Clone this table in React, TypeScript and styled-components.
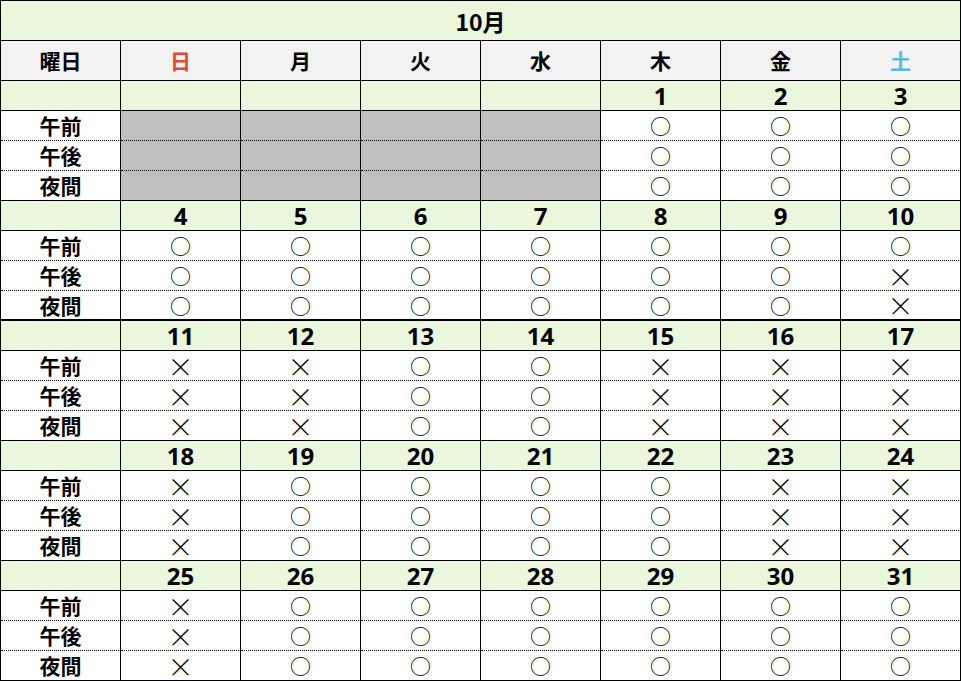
import React from 'react';
import styled, { createGlobalStyle, css } from 'styled-components';

const GlobalStyle = createGlobalStyle`
  html, body {
    margin: 0;
    padding: 0;
    background: #ffffff;
  }
  body {
    font-family: "Noto Sans CJK JP", "Noto Sans", sans-serif;
    color: #000;
  }
`;

const GREEN = '#ebf7dc';
const HEAD = '#f2f2f2';
const BLOCKED = '#bfbfbf';

const Sheet = styled.div`
  display: grid;
  grid-template-columns: repeat(8, 120px);
  width: 961px;
  box-sizing: border-box;
  border-top: 1px solid #000;
  border-left: 1px solid #000;
`;

const Title = styled.div`
  grid-column: 1 / -1;
  height: 40px;
  box-sizing: border-box;
  border-right: 1px solid #000;
  border-bottom: 1px solid #000;
  background: ${GREEN};
  display: flex;
  align-items: center;
  justify-content: center;
  font-size: 23px;
  font-weight: 700;
`;

const Cell = styled.div<{ $bg?: string; $h: number; $dotted?: boolean; $thick?: boolean }>`
  height: ${(p) => p.$h}px;
  box-sizing: border-box;
  border-right: 1px solid #000;
  border-bottom: ${(p) => (p.$dotted ? '1px dotted #000' : '1px solid #000')};
  ${(p) =>
    p.$thick &&
    css`
      border-bottom-width: 2px;
    `}
  background: ${(p) => p.$bg ?? '#fff'};
  display: flex;
  align-items: center;
  justify-content: center;
  line-height: 1;
`;

const DayName = styled.span<{ $color?: string }>`
  font-size: 21px;
  font-weight: 700;
  color: ${(p) => p.$color ?? '#000'};
`;

const DateNum = styled.span`
  font-family: "Noto Sans", sans-serif;
  font-size: 24px;
  font-weight: 700;
  margin-top: 1px;
`;

const Slot = styled.span`
  font-size: 21px;
  font-weight: 700;
`;

const Mark = styled.span<{ $cross?: boolean }>`
  display: block;
  font-size: ${(p) => (p.$cross ? 26 : 21)}px;
  font-weight: ${(p) => (p.$cross ? 300 : 400)};
  line-height: 1;
`;

const days: { name: string; color?: string }[] = [
  { name: '日', color: '#e24a33' },
  { name: '月' },
  { name: '火' },
  { name: '水' },
  { name: '木' },
  { name: '金' },
  { name: '土', color: '#5ab9dc' },
];

const slots = ['午前', '午後', '夜間'];

// each week: dates (null = outside month) and marks per slot, '-' = blocked
type Week = { dates: (number | null)[]; marks: string[] };

const weeks: Week[] = [
  {
    dates: [null, null, null, null, 1, 2, 3],
    marks: ['----○○○', '----○○○', '----○○○'],
  },
  {
    dates: [4, 5, 6, 7, 8, 9, 10],
    marks: ['○○○○○○○', '○○○○○○×', '○○○○○○×'],
  },
  {
    dates: [11, 12, 13, 14, 15, 16, 17],
    marks: ['××○○×××', '××○○×××', '××○○×××'],
  },
  {
    dates: [18, 19, 20, 21, 22, 23, 24],
    marks: ['×○○○○××', '×○○○○××', '×○○○○××'],
  },
  {
    dates: [25, 26, 27, 28, 29, 30, 31],
    marks: ['×○○○○○○', '×○○○○○○', '×○○○○○○'],
  },
];

export default function App() {
  return (
    <>
      <GlobalStyle />
      <Sheet>
        <Title>10月</Title>
        <Cell $h={40} $bg={HEAD}>
          <DayName>曜日</DayName>
        </Cell>
        {days.map((d) => (
          <Cell key={d.name} $h={40} $bg={HEAD}>
            <DayName $color={d.color}>{d.name}</DayName>
          </Cell>
        ))}
        {weeks.map((w, wi) => (
          <React.Fragment key={wi}>
            <Cell $h={30} $bg={GREEN} />
            {w.dates.map((n, i) => (
              <Cell key={`d${i}`} $h={30} $bg={GREEN}>
                {n !== null && <DateNum>{n}</DateNum>}
              </Cell>
            ))}
            {slots.map((s, si) => {
              const last = si === slots.length - 1;
              const thick = last && wi === 1;
              return (
                <React.Fragment key={s}>
                  <Cell $h={30} $dotted={!last} $thick={thick}>
                    <Slot>{s}</Slot>
                  </Cell>
                  {Array.from(w.marks[si]).map((m, i) => (
                    <Cell
                      key={`m${i}`}
                      $h={30}
                      $dotted={!last}
                      $thick={thick}
                      $bg={m === '-' ? BLOCKED : undefined}
                    >
                      {m !== '-' && <Mark $cross={m === '×'}>{m}</Mark>}
                    </Cell>
                  ))}
                </React.Fragment>
              );
            })}
          </React.Fragment>
        ))}
      </Sheet>
    </>
  );
}
